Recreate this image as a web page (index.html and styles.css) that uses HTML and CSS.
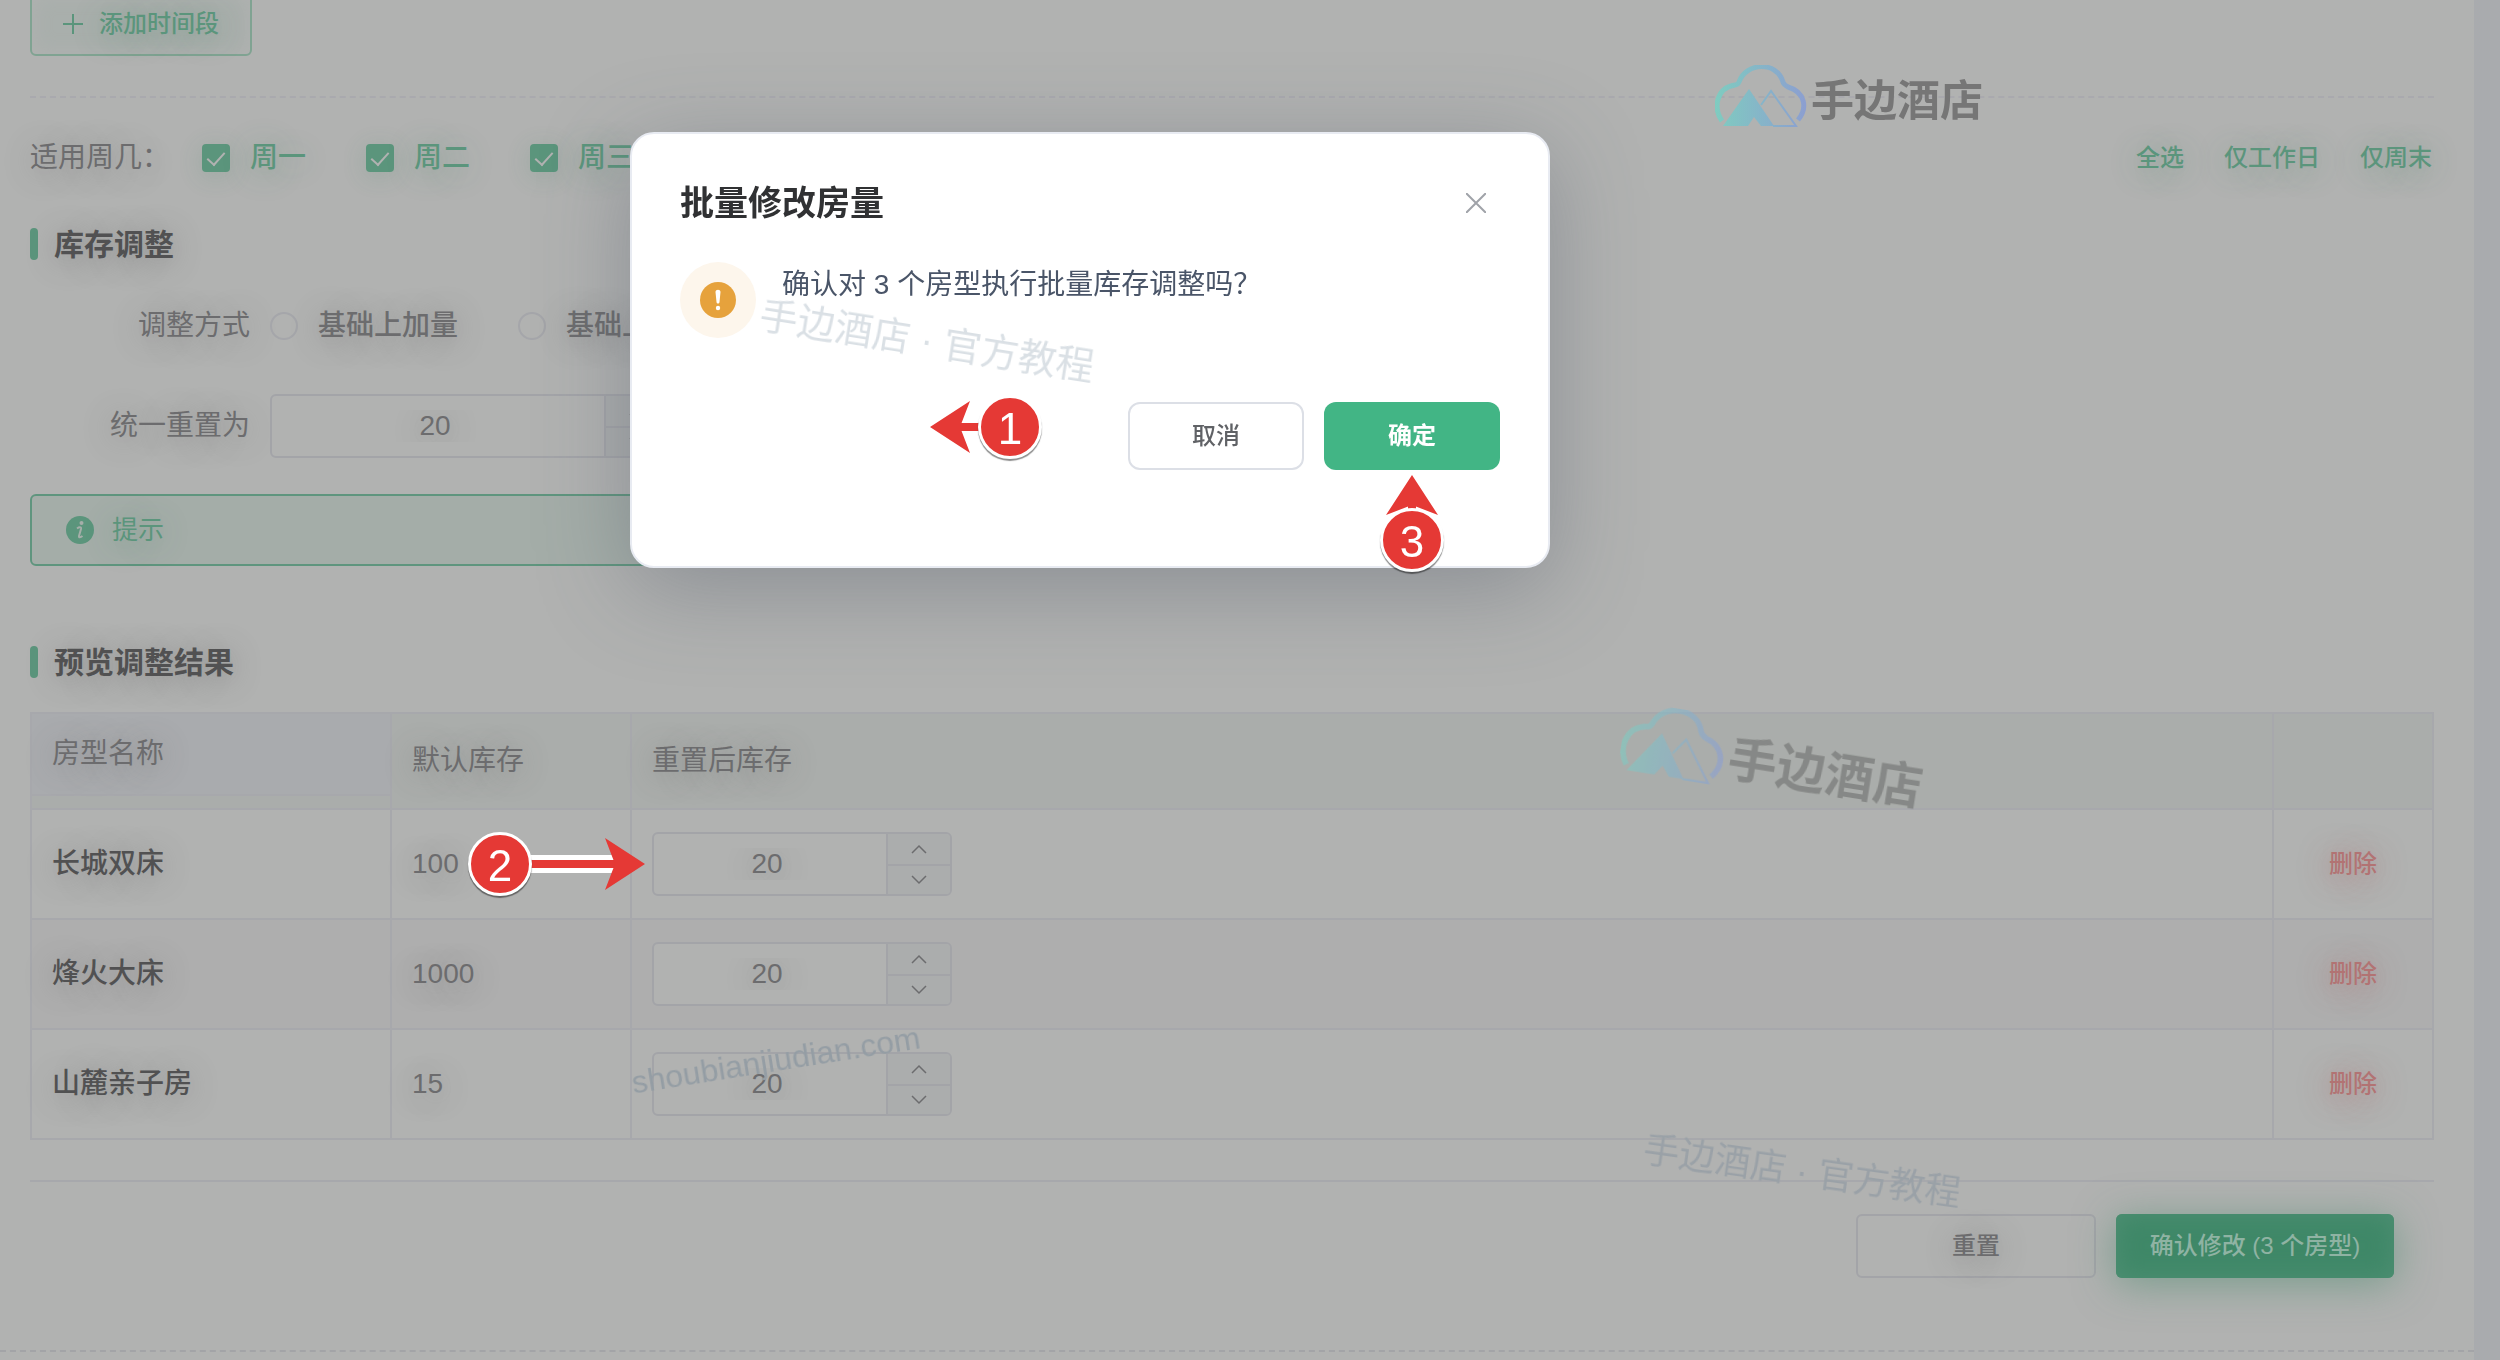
FILE: index.html
```
<!DOCTYPE html>
<html lang="zh-CN">
  <head>
    <meta charset="UTF-8" />
    <meta name="viewport" content="width=device-width, initial-scale=1.0" />
    <title>批量修改房量</title>
    <link rel="stylesheet" href="styles.css">
  </head>
  <body>
    <svg width="0" height="0" class="defs" aria-hidden="true">
      <defs>
        <linearGradient id="brand" x1="0" y1="0" x2="90" y2="0" gradientUnits="userSpaceOnUse">
          <stop offset="0" stop-color="#7fccc0" />
          <stop offset="1" stop-color="#8c9fd0" />
        </linearGradient>
        <symbol id="cloud" viewBox="0 0 92 62">
          <path d="M7 56C-2 43 1 23 20 20C22 20 23 19 24 17C31 -3 62 -4 68 17C69 20 71 21 73 22C90 27 93 43 83 55" fill="none" stroke="url(#brand)" stroke-width="5" />
          <path d="M8 61L34 24L59 61H46L39 52L33 61Z" fill="url(#brand)" />
          <path d="M46 40L56 26L81 61H58" fill="none" stroke="url(#brand)" stroke-width="2" />
        </symbol>
        <symbol id="up" viewBox="0 0 16 10">
          <path d="M1 9L8 2L15 9" fill="none" stroke="currentColor" stroke-width="1.5" />
        </symbol>
        <symbol id="down" viewBox="0 0 16 10">
          <path d="M1 1L8 8L15 1" fill="none" stroke="currentColor" stroke-width="1.5" />
        </symbol>
      </defs>
    </svg>

    <main class="panel">
      <div class="content">
        <button type="button" class="add-btn">
          <svg width="20" height="20" viewBox="0 0 20 20"><path d="M10 0V20M0 10H20" stroke="currentColor" stroke-width="2" /></svg>
          添加时间段
        </button>

        <div class="weekdays">
          <span class="weekdays-label">适用周几：</span>
          <label class="option green"><input type="checkbox" checked />周一</label>
          <label class="option green"><input type="checkbox" checked />周二</label>
          <label class="option green"><input type="checkbox" checked />周三</label>
          <div class="quick-links">
            <a href="#">全选</a>
            <a href="#">仅工作日</a>
            <a href="#">仅周末</a>
          </div>
        </div>

        <h2>库存调整</h2>

        <div class="form-row">
          <span class="form-label">调整方式</span>
          <label class="option"><input type="radio" name="mode" />基础上加量</label>
          <label class="option"><input type="radio" name="mode" />基础上减量</label>
        </div>
        <div class="form-row second">
          <label class="form-label" for="resetTo">统一重置为</label>
          <div class="stepper wide">
            <input type="number" id="resetTo" value="20" />
            <div class="stepper-btns">
              <button type="button" aria-label="增加"><svg><use href="#up" /></svg></button>
              <button type="button" aria-label="减少"><svg><use href="#down" /></svg></button>
            </div>
          </div>
        </div>

        <div class="tip">
          <svg width="28" height="28" viewBox="0 0 28 28">
            <circle cx="14" cy="14" r="14" fill="currentColor" />
            <circle cx="15.5" cy="7" r="2" fill="#a5aea9" />
            <path d="M11 12.5C13 11 15.5 10.500 15 13L13 20C12.700 22 14.5 21.5 16.5 20" fill="none" stroke="#a5aea9" stroke-width="2" />
          </svg>
          提示
        </div>

        <h2 class="preview-title">预览调整结果</h2>

        <table>
          <colgroup>
            <col class="col-name" />
            <col class="col-stock" />
            <col />
            <col class="col-action" />
          </colgroup>
          <thead>
            <tr>
              <th class="name-head"><div>房型名称</div></th>
              <th>默认库存</th>
              <th>重置后库存</th>
              <th></th>
            </tr>
          </thead>
          <tbody>
            <tr>
              <td class="name">长城双床</td>
              <td>100</td>
              <td>
                <div class="stepper">
                  <input type="number" value="20" aria-label="长城双床 重置后库存" />
                  <div class="stepper-btns">
                    <button type="button" aria-label="增加"><svg><use href="#up" /></svg></button>
                    <button type="button" aria-label="减少"><svg><use href="#down" /></svg></button>
                  </div>
                </div>
              </td>
              <td class="action"><button type="button">删除</button></td>
            </tr>
            <tr>
              <td class="name">烽火大床</td>
              <td>1000</td>
              <td>
                <div class="stepper">
                  <input type="number" value="20" aria-label="烽火大床 重置后库存" />
                  <div class="stepper-btns">
                    <button type="button" aria-label="增加"><svg><use href="#up" /></svg></button>
                    <button type="button" aria-label="减少"><svg><use href="#down" /></svg></button>
                  </div>
                </div>
              </td>
              <td class="action"><button type="button">删除</button></td>
            </tr>
            <tr>
              <td class="name">山麓亲子房</td>
              <td>15</td>
              <td>
                <div class="stepper">
                  <input type="number" value="20" aria-label="山麓亲子房 重置后库存" />
                  <div class="stepper-btns">
                    <button type="button" aria-label="增加"><svg><use href="#up" /></svg></button>
                    <button type="button" aria-label="减少"><svg><use href="#down" /></svg></button>
                  </div>
                </div>
              </td>
              <td class="action"><button type="button">删除</button></td>
            </tr>
          </tbody>
        </table>

        <div class="footer-btns">
          <button type="button" class="reset-btn">重置</button>
          <button type="button" class="submit-btn">确认修改 (3 个房型)</button>
        </div>
      </div>
    </main>

    <div class="mask">
      <section class="modal" role="dialog" aria-labelledby="modalTitle">
        <div class="modal-head">
          <h3 id="modalTitle">批量修改房量</h3>
          <button type="button" class="close-btn" aria-label="关闭">
            <svg width="20" height="20" viewBox="0 0 20 20"><path d="M0 0L20 20M20 0L0 20" stroke="#a0a3a9" stroke-width="2" /></svg>
          </button>
        </div>
        <div class="modal-body">
          <span class="warn">
            <svg width="36" height="36" viewBox="0 0 36 36">
              <circle cx="18" cy="18" r="18" fill="#e6a23c" />
              <path d="M15.5 10C15.5 7 20.5 7 20.5 10L19.5 20C19.3 22 16.7 22 16.5 20Z" fill="#fff" />
              <circle cx="18" cy="26" r="2.2" fill="#fff" />
            </svg>
          </span>
          <p>确认对 3 个房型执行批量库存调整吗？</p>
        </div>
        <div class="modal-foot">
          <button type="button" class="cancel-btn">取消</button>
          <button type="button" class="ok-btn">确定</button>
        </div>
      </section>
    </div>

    <!-- watermarks -->
    <div class="mark brand-a"><svg><use href="#cloud" /></svg><span>手边酒店</span></div>
    <div class="mark brand-b"><svg><use href="#cloud" /></svg><span>手边酒店</span></div>
    <div class="mark text-a">手边酒店 · 官方教程</div>
    <div class="mark text-b">手边酒店 · 官方教程</div>
    <div class="mark text-c">shoubianjiudian.com</div>

    <!-- step markers -->
    <div class="step step-1">
      <svg width="60" height="52" viewBox="0 0 60 52">
        <path d="M30 26H60" stroke="#fff" stroke-width="18" />
        <path d="M24 26H60" stroke="#e53935" stroke-width="8" />
        <path d="M0 26L40 0L30 26L40 52Z" fill="#e53935" />
      </svg>
      <span>1</span>
    </div>
    <div class="step step-2">
      <span>2</span>
      <svg width="124" height="52" viewBox="0 0 124 52">
        <path d="M0 26H93" stroke="#fff" stroke-width="18" />
        <path d="M0 26H96" stroke="#e53935" stroke-width="8" />
        <path d="M124 26L84 0L94 26L84 52Z" fill="#e53935" />
      </svg>
    </div>
    <div class="step step-3">
      <svg width="52" height="42" viewBox="0 0 52 42">
        <path d="M26 0L0 40L26 30L52 40Z" fill="#e53935" />
        <path d="M26 20V42" stroke="#e53935" stroke-width="8" />
      </svg>
      <span>3</span>
    </div>
  </body>
</html>
```
FILE: styles.css
```
* {
  box-sizing: border-box;
}

body {
  margin: 0;
  padding-right: 26px;
  background-color: #a9abae;
  font-family: "Liberation Sans", "Noto Sans CJK SC", sans-serif;
  font-size: 28px;
  line-height: 1.5;
  color: #6c6c6e;
  overflow: hidden;
}

.defs {
  position: absolute;
}

button,
input {
  font-family: inherit;
  margin: 0;
}

button {
  display: flex;
  align-items: center;
  justify-content: center;
  padding: 0;
  border: none;
  background: none;
  font-size: 24px;
  font-weight: 500;
  line-height: 36px;
}

.panel {
  background-color: #b1b2b1;
  min-height: 100vh;
  text-shadow: 0 4px 30px rgba(90, 90, 90, 0.45);
}

.content {
  padding: 0 40px 72px 30px;
  border-bottom: 2px dashed #a3a4a7;
  display: flow-root;
}

.add-btn {
  width: 222px;
  height: 64px;
  margin-top: -8px;
  gap: 16px;
  border: 2px solid #80a392;
  border-radius: 6px;
  background-color: #a9afac;
  box-shadow: inset 0 0 20px #b1b2b1;
  color: #5b957c;
  text-shadow: 0 4px 30px rgba(60, 130, 95, 0.45);
}

.weekdays {
  display: flex;
  align-items: center;
  gap: 60px;
  height: 102px;
  margin-top: 40px;
  padding-top: 20px;
  border-top: 2px dashed #a9a9ae;
}

.weekdays-label {
  width: 112px;
  white-space: nowrap;
}

.option {
  display: flex;
  align-items: center;
  gap: 20px;
  font-weight: 500;
}

.option input {
  appearance: none;
  display: flex;
  align-items: center;
  justify-content: center;
  width: 28px;
  height: 28px;
  border: 2px solid #a5a6aa;
  border-radius: 50%;
}

.green {
  color: #5b957c;
  text-shadow: 0 4px 30px rgba(60, 130, 95, 0.45);
}

.green input {
  border: none;
  border-radius: 4px;
  background-color: #5b957c;
  box-shadow: 0 4px 24px rgba(60, 130, 95, 0.2);
}

.green input::after {
  content: "";
  width: 8px;
  height: 15px;
  margin-bottom: 4px;
  border: solid #b1b2b1;
  border-width: 0 2px 2px 0;
  transform: rotate(42deg);
}

.quick-links {
  display: flex;
  gap: 40px;
  margin-left: auto;
  padding-right: 2px;
}

.quick-links a {
  color: #5b957c;
  font-size: 24px;
  font-weight: 500;
  text-decoration: none;
  text-shadow: 0 4px 30px rgba(60, 130, 95, 0.45);
}

h2 {
  display: flex;
  align-items: center;
  gap: 16px;
  height: 32px;
  margin: 30px 0 34px;
  color: #515152;
  font-size: 30px;
  font-weight: bold;
}

h2::before {
  content: "";
  width: 8px;
  height: 32px;
  border-radius: 4px;
  background-color: #5b957c;
}

.preview-title {
  margin-top: 80px;
}

.form-row {
  display: flex;
  align-items: center;
  height: 64px;
  gap: 20px;
}

.form-row .option + .option {
  margin-left: 40px;
}

.second {
  margin-top: 36px;
}

.form-label {
  width: 220px;
  text-align: right;
}

.stepper {
  display: flex;
  width: 300px;
  height: 64px;
  border: 2px solid #a3a4a8;
  border-radius: 6px;
  background-color: #b1b2b1;
  overflow: hidden;
}

.wide {
  width: 400px;
}

.stepper input {
  appearance: textfield;
  flex: 1;
  min-width: 0;
  padding: 0 6px 0 0;
  border: none;
  background: none;
  color: #6c6c6e;
  font-size: 28px;
  text-align: center;
  text-shadow: inherit;
}

.stepper input::-webkit-inner-spin-button {
  appearance: none;
}

.stepper-btns {
  width: 64px;
  border-left: 2px solid #a3a4a8;
  background-color: #abadad;
}

.stepper-btns button {
  width: 100%;
  height: 30px;
  color: #6c6c6e;
}

.stepper-btns button + button {
  border-top: 2px solid #a3a4a8;
}

.stepper-btns svg {
  width: 16px;
  height: 10px;
}

.tip {
  display: flex;
  align-items: center;
  gap: 18px;
  max-width: 1200px;
  height: 72px;
  margin-top: 36px;
  padding: 0 34px;
  border: 2px solid #5f957e;
  border-radius: 6px;
  background-color: #a4ada8;
  color: #5b957c;
  font-size: 26px;
  text-shadow: 0 4px 30px rgba(60, 130, 95, 0.45);
}

table {
  width: 100%;
  table-layout: fixed;
  border-collapse: separate;
  border-spacing: 0;
  border: solid #a7a8ac;
  border-width: 2px 0 0 2px;
}

.col-name {
  width: 360px;
}

.col-stock {
  width: 240px;
}

.col-action {
  width: 160px;
}

th,
td {
  padding: 0 20px;
  border: solid #a7a8ac;
  border-width: 0 2px 2px 0;
  text-align: left;
}

th {
  height: 96px;
  background-color: #aaadab;
  font-weight: normal;
}

.name-head {
  padding: 0;
  vertical-align: top;
}

.name-head div {
  height: 82px;
  padding: 0 20px;
  border-bottom: 2px solid #a7a8ac;
  background-color: #a9abae;
  line-height: 80px;
}

td {
  height: 110px;
}

tbody tr:nth-child(2) td {
  background-color: #aeaeae;
}

.name {
  color: #515152;
  font-weight: 500;
}

.action button {
  width: 100%;
  color: #b27373;
  text-shadow: 0 4px 30px rgba(180, 80, 80, 0.5);
}

.footer-btns {
  display: flex;
  justify-content: flex-end;
  gap: 20px;
  margin-top: 40px;
  padding: 32px 40px 0 0;
  border-top: 2px solid #a7a8ac;
}

.reset-btn {
  width: 240px;
  height: 64px;
  border: 2px solid #a3a4a8;
  border-radius: 6px;
  color: #6c6c6e;
  text-shadow: 0 4px 30px rgba(90, 90, 90, 0.45);
}

.submit-btn {
  width: 278px;
  height: 64px;
  border-radius: 6px;
  background-color: #3f8868;
  box-shadow: 0 6px 40px rgba(63, 136, 104, 0.5), inset 0 0 24px #4f8f73;
  color: #8fb3a3;
}

.mask {
  position: fixed;
  inset: 0;
  padding: 132px 0 0 630px;
}

.modal {
  width: 100%;
  max-width: 920px;
  padding: 44px 48px 96px;
  border: 2px solid #e8ebf2;
  border-radius: 24px;
  background-color: #fff;
  box-shadow: 0 20px 90px rgba(75, 85, 100, 0.38);
}

.modal-head {
  display: flex;
  align-items: center;
  justify-content: space-between;
  height: 50px;
}

.modal-head h3 {
  margin: 0;
  color: #303133;
  font-size: 34px;
  font-weight: bold;
}

.close-btn {
  width: 48px;
  height: 48px;
}

.modal-body {
  display: flex;
  gap: 26px;
  margin-top: 34px;
}

.warn {
  display: flex;
  align-items: center;
  justify-content: center;
  width: 76px;
  height: 76px;
  border-radius: 50%;
  background-color: #fdf6ec;
}

.modal-body p {
  margin: 0;
  color: #4a5568;
  line-height: 46px;
}

.modal-foot {
  display: flex;
  justify-content: flex-end;
  gap: 20px;
  margin-top: 64px;
}

.modal-foot button {
  width: 176px;
  height: 68px;
  border-radius: 12px;
}

.modal-foot .cancel-btn {
  border: 2px solid #dcdfe6;
  color: #606266;
}

.modal-foot .ok-btn {
  background-color: #42b585;
  color: #fff;
  font-weight: bold;
}

.mark {
  position: absolute;
  display: flex;
  white-space: nowrap;
  pointer-events: none;
}

.brand-a {
  left: 1715px;
  top: 65px;
  gap: 4px;
  color: #767676;
  font-size: 43px;
  font-weight: bold;
  line-height: 72px;
}

.brand-a svg {
  width: 92px;
  height: 62px;
}

.brand-b {
  left: 1620px;
  top: 724px;
  gap: 4px;
  color: #6f706f;
  font-size: 49px;
  font-weight: bold;
  line-height: 82px;
  opacity: 0.6;
  transform: rotate(9deg);
}

.brand-b svg {
  width: 104px;
  height: 70px;
}

.text-a {
  left: 758px;
  top: 313px;
  color: #dae0e5;
  font-size: 38px;
  transform: rotate(9deg);
}

.text-b {
  left: 1642px;
  top: 1145px;
  color: #9aa1a7;
  font-size: 36px;
  transform: rotate(8deg);
}

.text-c {
  left: 630px;
  top: 1036px;
  color: #949da4;
  font-size: 32px;
  transform: rotate(-9deg);
}

.step {
  position: absolute;
  display: flex;
  align-items: center;
}

.step span {
  position: relative;
  width: 64px;
  height: 64px;
  border: 3px solid #fff;
  border-radius: 50%;
  background-color: #e53935;
  box-shadow: 0 2px 1px rgba(0, 0, 0, 0.45);
  color: #fff;
  font-size: 44px;
  line-height: 62px;
  text-align: center;
}

.step-1 {
  left: 930px;
  top: 395px;
}

.step-1 svg {
  margin-right: -12px;
}

.step-2 {
  left: 468px;
  top: 832px;
}

.step-2 svg {
  margin-left: -11px;
}

.step-2 span {
  z-index: 1;
}

.step-3 {
  left: 1380px;
  top: 475px;
  flex-direction: column;
}

.step-3 svg {
  margin-bottom: -9px;
}
```
